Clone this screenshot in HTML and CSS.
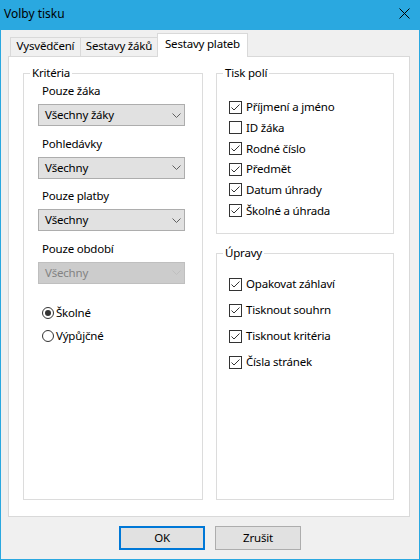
FILE: index.html
```html
<!DOCTYPE html>
<html lang="cs">
<head>
<meta charset="utf-8">
<title>Volby tisku</title>
<link rel="stylesheet" href="styles.css">
</head>
<body>
<div class="window">
  <div class="titlebar">
    <span class="title">Volby tisku</span>
    <svg class="close" width="11" height="11" viewBox="0 0 11 11"><path d="M0.5 0.5 L10.5 10.5 M10.5 0.5 L0.5 10.5" stroke="#000" stroke-width="1" fill="none"/></svg>
  </div>
  <div class="client">
    <div class="tabs">
      <div class="tab t1">Vysvědčení</div>
      <div class="tab t2">Sestavy žáků</div>
      <div class="tab t3 active">Sestavy plateb</div>
    </div>
    <div class="panel">
      <fieldset class="group criteria">
        <legend>Kritéria</legend>
        <div class="gbody">
          <div class="field">
            <div class="label">Pouze žáka</div>
            <div class="combo"><span>Všechny žáky</span><svg class="chev" width="9" height="5" viewBox="0 0 9 5"><path d="M0.5 0.5 L4.5 4.5 L8.5 0.5" fill="none" stroke="#606060"/></svg></div>
          </div>
          <div class="field">
            <div class="label">Pohledávky</div>
            <div class="combo"><span>Všechny</span><svg class="chev" width="9" height="5" viewBox="0 0 9 5"><path d="M0.5 0.5 L4.5 4.5 L8.5 0.5" fill="none" stroke="#606060"/></svg></div>
          </div>
          <div class="field">
            <div class="label">Pouze platby</div>
            <div class="combo"><span>Všechny</span><svg class="chev" width="9" height="5" viewBox="0 0 9 5"><path d="M0.5 0.5 L4.5 4.5 L8.5 0.5" fill="none" stroke="#606060"/></svg></div>
          </div>
          <div class="field">
            <div class="label">Pouze období</div>
            <div class="combo disabled"><span>Všechny</span><svg class="chev" width="9" height="5" viewBox="0 0 9 5"><path d="M0.5 0.5 L4.5 4.5 L8.5 0.5" fill="none" stroke="#BFBFBF"/></svg></div>
          </div>
          <div class="radios">
            <div class="radio"><span class="rb on"></span><span>Školné</span></div>
            <div class="radio"><span class="rb"></span><span>Výpůjčné</span></div>
          </div>
        </div>
      </fieldset>
      <div class="rightcol">
        <fieldset class="group fields">
          <legend>Tisk polí</legend>
          <div class="gbody">
            <div class="check"><svg class="cb" width="13" height="13" viewBox="0 0 13 13"><rect x="0.5" y="0.5" width="12" height="12" fill="#fff" stroke="#333"/><path d="M2.5 6.5 L5 9 L10.5 3.5" fill="none" stroke="#333"/></svg><span>Příjmení a jméno</span></div>
            <div class="check"><svg class="cb" width="13" height="13" viewBox="0 0 13 13"><rect x="0.5" y="0.5" width="12" height="12" fill="#fff" stroke="#333"/></svg><span>ID žáka</span></div>
            <div class="check"><svg class="cb" width="13" height="13" viewBox="0 0 13 13"><rect x="0.5" y="0.5" width="12" height="12" fill="#fff" stroke="#333"/><path d="M2.5 6.5 L5 9 L10.5 3.5" fill="none" stroke="#333"/></svg><span>Rodné číslo</span></div>
            <div class="check"><svg class="cb" width="13" height="13" viewBox="0 0 13 13"><rect x="0.5" y="0.5" width="12" height="12" fill="#fff" stroke="#333"/><path d="M2.5 6.5 L5 9 L10.5 3.5" fill="none" stroke="#333"/></svg><span>Předmět</span></div>
            <div class="check"><svg class="cb" width="13" height="13" viewBox="0 0 13 13"><rect x="0.5" y="0.5" width="12" height="12" fill="#fff" stroke="#333"/><path d="M2.5 6.5 L5 9 L10.5 3.5" fill="none" stroke="#333"/></svg><span>Datum úhrady</span></div>
            <div class="check"><svg class="cb" width="13" height="13" viewBox="0 0 13 13"><rect x="0.5" y="0.5" width="12" height="12" fill="#fff" stroke="#333"/><path d="M2.5 6.5 L5 9 L10.5 3.5" fill="none" stroke="#333"/></svg><span>Školné a úhrada</span></div>
          </div>
        </fieldset>
        <fieldset class="group edits">
          <legend>Úpravy</legend>
          <div class="gbody">
            <div class="check"><svg class="cb" width="13" height="13" viewBox="0 0 13 13"><rect x="0.5" y="0.5" width="12" height="12" fill="#fff" stroke="#333"/><path d="M2.5 6.5 L5 9 L10.5 3.5" fill="none" stroke="#333"/></svg><span>Opakovat záhlaví</span></div>
            <div class="check"><svg class="cb" width="13" height="13" viewBox="0 0 13 13"><rect x="0.5" y="0.5" width="12" height="12" fill="#fff" stroke="#333"/><path d="M2.5 6.5 L5 9 L10.5 3.5" fill="none" stroke="#333"/></svg><span>Tisknout souhrn</span></div>
            <div class="check"><svg class="cb" width="13" height="13" viewBox="0 0 13 13"><rect x="0.5" y="0.5" width="12" height="12" fill="#fff" stroke="#333"/><path d="M2.5 6.5 L5 9 L10.5 3.5" fill="none" stroke="#333"/></svg><span>Tisknout kritéria</span></div>
            <div class="check"><svg class="cb" width="13" height="13" viewBox="0 0 13 13"><rect x="0.5" y="0.5" width="12" height="12" fill="#fff" stroke="#333"/><path d="M2.5 6.5 L5 9 L10.5 3.5" fill="none" stroke="#333"/></svg><span>Čísla stránek</span></div>
          </div>
        </fieldset>
      </div>
    </div>
    <div class="buttons">
      <div class="btn default">OK</div>
      <div class="btn">Zrušit</div>
    </div>
  </div>
</div>
</body>
</html>
```
FILE: styles.css
```css
html, body {
  margin: 0;
  padding: 0;
}
body {
  font-family: "Noto Sans", "Open Sans", sans-serif;
  font-size: 11.5px;
  letter-spacing: -0.2px;
  line-height: 16px;
  color: #000;
  background: #F0F0F0;
}
.window {
  width: 420px;
  height: 560px;
  box-sizing: border-box;
  border: 1px solid #2AA8E0;
  border-top: 0;
  display: flex;
  flex-direction: column;
  background: #F0F0F0;
}
.titlebar {
  height: 30px;
  flex: none;
  margin: 0 -1px;
  background: #2AA8E0;
  display: flex;
  justify-content: space-between;
  align-items: flex-start;
  box-sizing: border-box;
  padding: 6px 10px 0 4px;
  font-size: 12px;
  letter-spacing: 0;
}
.close {
  margin-top: 2px;
}
.client {
  flex: 1;
  display: flex;
  flex-direction: column;
  padding: 3px 9px 9px 7px;
}
.tabs {
  display: flex;
  align-items: flex-end;
  height: 23px;
  padding-left: 2px;
  flex: none;
}
.tab {
  box-sizing: border-box;
  height: 19px;
  border: 1px solid #D9D9D9;
  border-bottom: 0;
  background: #F0F0F0;
  text-align: center;
  white-space: nowrap;
}
.t1 { width: 71px; }
.t2 { width: 77px; border-left: 0; }
.tab.active {
  width: 91px;
  height: 24px;
  margin-left: -1px;
  margin-bottom: -1px;
  padding-top: 2px;
  background: #fff;
  z-index: 1;
}
.panel {
  flex: none;
  height: 461px;
  box-sizing: border-box;
  border: 1px solid #D9D9D9;
  background: #fff;
  display: grid;
  grid-template-columns: 180px 178px;
  column-gap: 13px;
  padding: 8px 15px 16px 14px;
}
.group {
  margin: 0;
  padding: 0;
  min-width: 0;
  border: 1px solid #DCDCDC;
  box-sizing: border-box;
}
.group legend {
  padding: 0 2px;
  margin-left: 6px;
  line-height: 16px;
}
.criteria {
  height: 435px;
}
.criteria .gbody {
  padding: 2px 0 0 14px;
}
.field {
  margin-bottom: 9.67px;
}
.label {
  margin-left: 4px;
  margin-bottom: 5px;
}
.combo {
  width: 147px;
  height: 22px;
  box-sizing: border-box;
  border: 1px solid #ADADAD;
  background: #E1E1E1;
  display: flex;
  align-items: center;
  justify-content: space-between;
  padding: 0 3px 0 6px;
}
.combo.disabled {
  background: #CCCCCC;
  border-color: #BFBFBF;
  color: #838383;
}
.chev {
  display: block;
}
.radios {
  margin-top: 18px;
}
.radio {
  display: flex;
  align-items: center;
  height: 23px;
  padding-left: 4px;
  gap: 2px;
}
.rb {
  width: 12px;
  height: 12px;
  box-sizing: border-box;
  border: 1px solid #333;
  border-radius: 50%;
  background: #fff;
  display: flex;
  align-items: center;
  justify-content: center;
}
.rb.on::after {
  content: "";
  width: 6px;
  height: 6px;
  border-radius: 50%;
  background: #333;
}
.rightcol {
  display: flex;
  flex-direction: column;
  gap: 11px;
}
.fields {
  height: 169px;
}
.fields .gbody {
  padding: 16px 0 0 12px;
}
.edits {
  height: 255px;
}
.edits .gbody {
  padding: 10px 0 0 12px;
}
.check {
  display: flex;
  align-items: center;
  gap: 4px;
  white-space: nowrap;
}
.fields .check { height: 20.67px; }
.edits .check { height: 26px; }
.cb {
  display: block;
  flex: none;
}
.buttons {
  flex: none;
  margin-top: 9px;
  display: flex;
  justify-content: center;
  gap: 10px;
  padding-left: 2px;
}
.btn {
  width: 86px;
  height: 24px;
  box-sizing: border-box;
  border: 1px solid #ADADAD;
  background: #E1E1E1;
  display: flex;
  align-items: center;
  justify-content: center;
}
.btn.default {
  border: 2px solid #0078D7;
}
```
